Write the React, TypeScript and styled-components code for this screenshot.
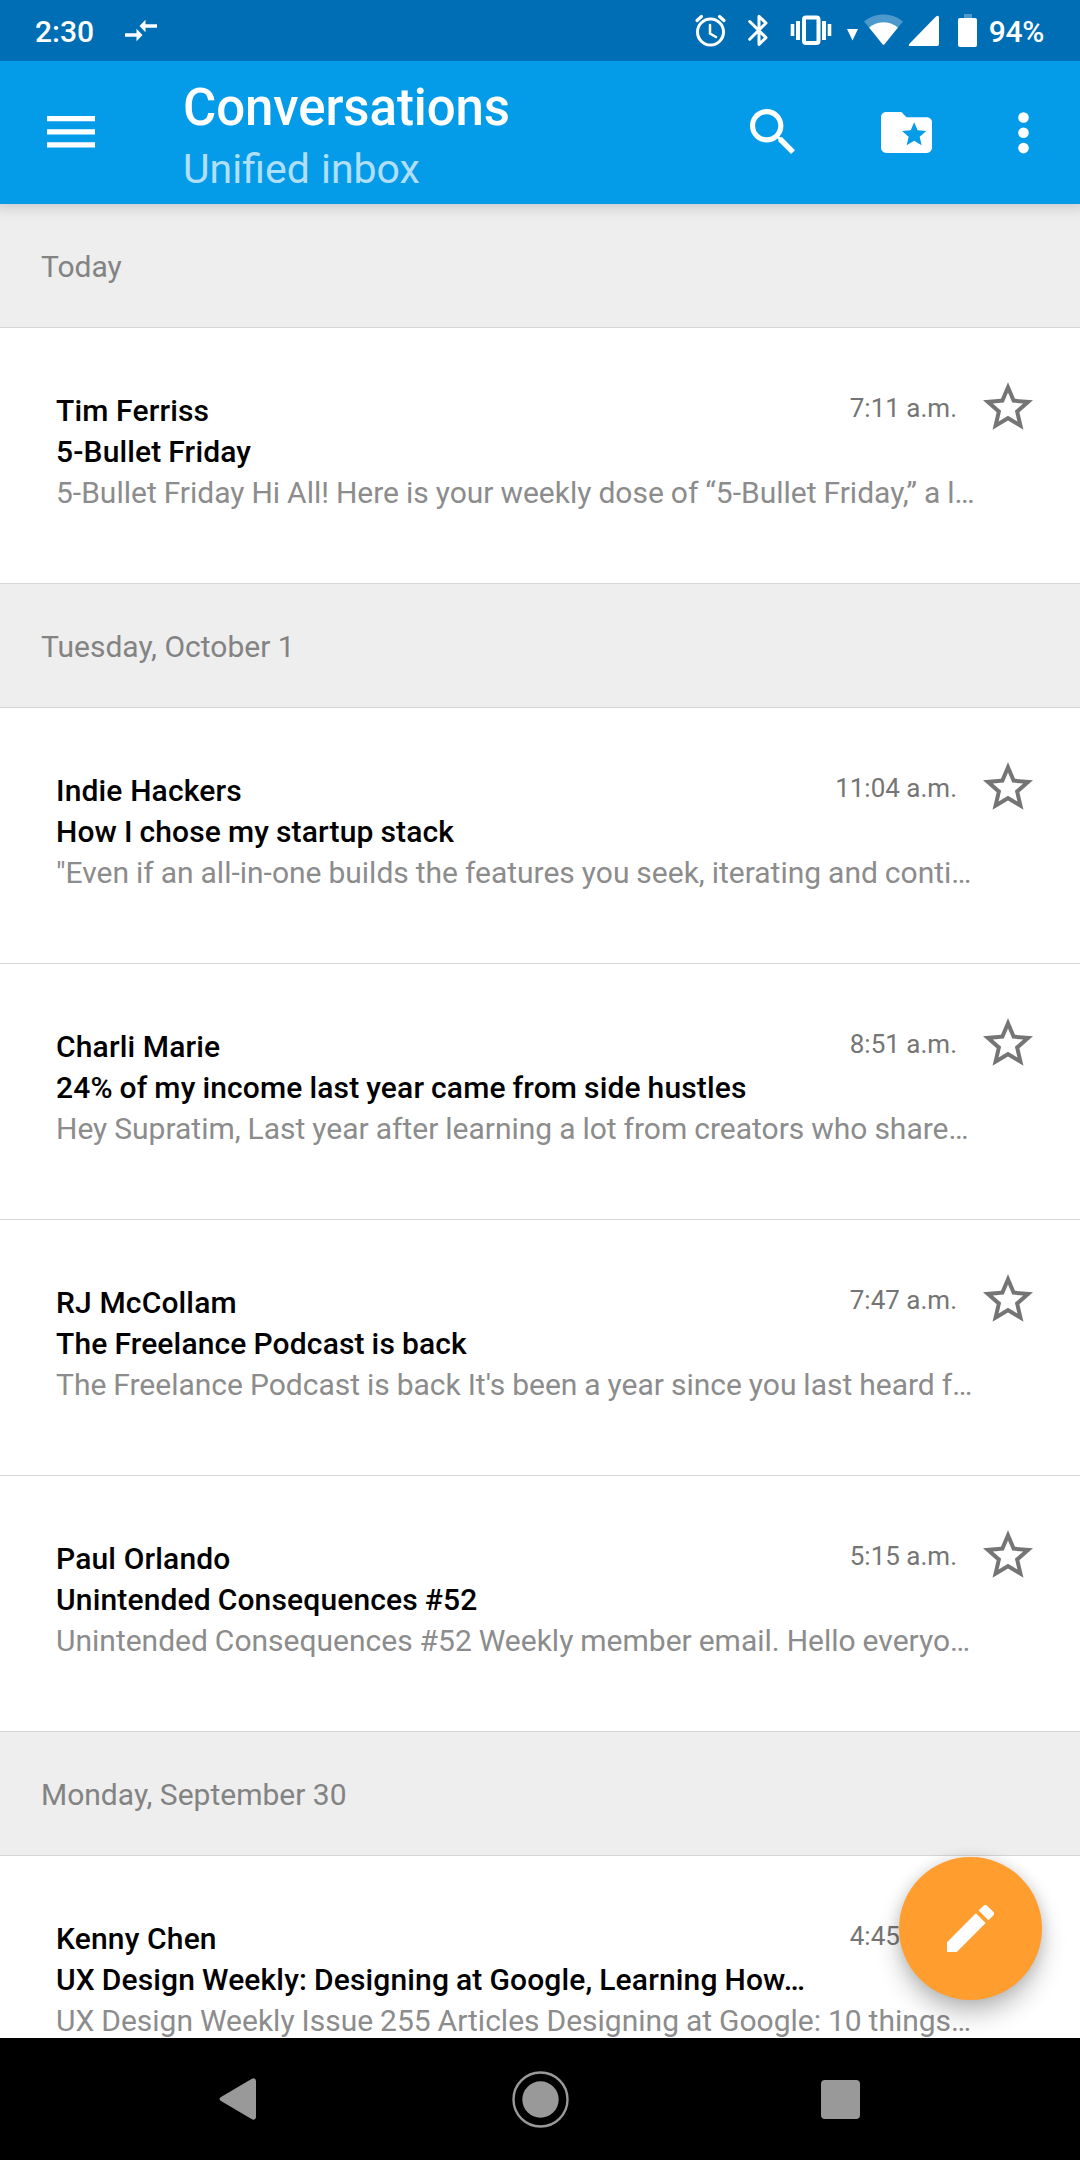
import React from "react";
import styled, { createGlobalStyle } from "styled-components";

const Global = createGlobalStyle`
  * { box-sizing: border-box; }
  html, body { margin: 0; padding: 0; }
  body { font-family: Roboto, "Noto Sans", sans-serif; background: #000; overflow: hidden; }
  svg { display: block; flex: none; }
`;

const Screen = styled.div`
  position: relative;
  width: 1080px;
  height: 2160px;
  display: flex;
  flex-direction: column;
  overflow: hidden;
  background: #fff;
`;

const StatusBar = styled.header`
  position: relative;
  z-index: 3;
  flex: none;
  height: 61px;
  padding: 0 36px 0 35px;
  display: flex;
  align-items: center;
  justify-content: space-between;
  background: #006eb5;
  color: #fff;
  font-size: 30px;
  font-weight: 500;
  line-height: 61px;
`;

const StatusGroup = styled.div`
  display: flex;
  align-items: center;
  height: 61px;
`;

const StatusText = styled.span<{ $gap?: number; $tracking?: number }>`
  margin-left: ${(p) => p.$gap ?? 0}px;
  padding-top: 2px;
  letter-spacing: ${(p) => p.$tracking ?? 0}px;
  white-space: nowrap;
`;

const SyncIcon = styled.svg`
  margin-left: 30px;
`;

const AppBar = styled.nav`
  position: relative;
  z-index: 2;
  flex: none;
  height: 143px;
  padding: 0 51px 0 46px;
  display: flex;
  align-items: center;
  background: #049be8;
  color: #fff;
  box-shadow: 0 -3px 14px 6px rgba(0, 0, 0, 0.17);
`;

const IconButton = styled.button<{ $gap?: number }>`
  margin: 0 0 0 ${(p) => p.$gap ?? 0}px;
  padding: 0;
  border: 0;
  background: none;
  color: inherit;
  flex: none;
`;

const Titles = styled.div`
  flex: 1;
  margin-left: 87px;
  align-self: flex-start;
`;

const Title = styled.h1`
  margin: 17px 0 0;
  font-size: 51px;
  line-height: 60px;
  font-weight: 500;
  letter-spacing: -0.1px;
`;

const Subtitle = styled.div`
  margin-top: 7px;
  font-size: 41px;
  line-height: 48px;
  word-spacing: 1px;
  color: rgba(255, 255, 255, 0.7);
`;

const List = styled.main`
  flex: 1;
  min-height: 0;
  overflow: hidden;
`;

const DateHeader = styled.h2`
  margin: 0;
  height: 124px;
  padding: 0 41px;
  font-size: 30px;
  font-weight: 400;
  line-height: 125px;
  color: #838383;
  background: #eee;
  border-bottom: 1px solid #d6d6d6;
`;

const Row = styled.article`
  height: 256px;
  padding: 54px 47px 0 56px;
  display: grid;
  grid-template-columns: minmax(0, 1fr) auto 50px;
  grid-template-rows: 20px 21px 41px 41px;
  border-bottom: 1px solid #d6d6d6;
`;

const Sender = styled.div`
  grid-column: 1;
  grid-row: 1 / 3;
  padding-top: 8px;
  font-size: 30px;
  line-height: 41px;
  font-weight: 500;
  letter-spacing: 0.15px;
  color: #000;
  white-space: nowrap;
`;

const Time = styled.time`
  grid-column: 2;
  grid-row: 1 / 3;
  padding: 6px 26px 0 0;
  font-size: 26px;
  line-height: 41px;
  color: #757575;
`;

const StarButton = styled.button`
  grid-column: 3;
  grid-row: 1 / 4;
  align-self: start;
  margin: 0;
  padding: 0;
  border: 0;
  background: none;
  color: #757575;
`;

const Subject = styled.div`
  grid-column: 1 / 3;
  grid-row: 3;
  padding-top: 8px;
  font-size: 30px;
  line-height: 41px;
  font-weight: 500;
  letter-spacing: 0.15px;
  word-spacing: -0.7px;
  color: #000;
  white-space: nowrap;
`;

const Preview = styled.div`
  grid-column: 1 / 4;
  grid-row: 4;
  padding-top: 8px;
  font-size: 30px;
  line-height: 41px;
  word-spacing: -0.5px;
  color: #8c8c8c;
  white-space: nowrap;
`;

const Fab = styled.button`
  position: absolute;
  z-index: 3;
  left: 899px;
  top: 1857px;
  width: 143px;
  height: 143px;
  padding: 0;
  border: 0;
  border-radius: 50%;
  display: flex;
  align-items: center;
  justify-content: center;
  background: #ff9d2e;
  color: #fff;
  box-shadow: 0 14px 24px rgba(0, 0, 0, 0.24), 0 0 14px rgba(0, 0, 0, 0.12);
`;

const NavBar = styled.footer`
  position: relative;
  z-index: 4;
  flex: none;
  height: 122px;
  padding: 0 220px 0 219px;
  display: flex;
  align-items: center;
  justify-content: space-between;
  background: #000;
  color: #999;
`;

const HomeIcon = styled.svg`
  margin-left: 3px;
`;

type Mail = { from: string; time: string; subject: string; preview: string };

const groups: { date: string; mails: Mail[] }[] = [
  {
    date: "Today",
    mails: [
      {
        from: "Tim Ferriss",
        time: "7:11 a.m.",
        subject: "5-Bullet Friday",
        preview: "5-Bullet Friday Hi All! Here is your weekly dose of “5-Bullet Friday,” a l…",
      },
    ],
  },
  {
    date: "Tuesday, October 1",
    mails: [
      {
        from: "Indie Hackers",
        time: "11:04 a.m.",
        subject: "How I chose my startup stack",
        preview: "\"Even if an all-in-one builds the features you seek, iterating and conti…",
      },
      {
        from: "Charli Marie",
        time: "8:51 a.m.",
        subject: "24% of my income last year came from side hustles",
        preview: "Hey Supratim, Last year after learning a lot from creators who share…",
      },
      {
        from: "RJ McCollam",
        time: "7:47 a.m.",
        subject: "The Freelance Podcast is back",
        preview: "The Freelance Podcast is back It's been a year since you last heard f…",
      },
      {
        from: "Paul Orlando",
        time: "5:15 a.m.",
        subject: "Unintended Consequences #52",
        preview: "Unintended Consequences #52 Weekly member email. Hello everyo…",
      },
    ],
  },
  {
    date: "Monday, September 30",
    mails: [
      {
        from: "Kenny Chen",
        time: "4:45 a.m.",
        subject: "UX Design Weekly: Designing at Google, Learning How…",
        preview: "UX Design Weekly Issue 255 Articles Designing at Google: 10 things…",
      },
    ],
  },
];

const StatusIcons = () => (
  <svg width="294" height="61" viewBox="690 0 294 61" fill="#fff">
    <g fill="none" stroke="#fff" strokeLinecap="round">
      <circle cx="710.5" cy="32" r="13" strokeWidth="3" />
      <path d="M710 25v8.5l6 3.5" strokeWidth="2.5" />
      <path d="M697 20.500l4.500-4M724 20.500l-4.500-4" strokeWidth="3.2" />
    </g>
    <path
      d="M749.700 21.500L766 37.600 759 44.300V16.300l7 6.700L749.700 39.300"
      fill="none"
      stroke="#fff"
      strokeWidth="3"
      strokeLinecap="round"
      strokeLinejoin="round"
    />
    <rect x="804" y="17.500" width="14.500" height="25.500" rx="2" fill="none" stroke="#fff" strokeWidth="4" />
    <path d="M796 21h4v19h-4zM790.700 24h3.600v12h-3.600zM822 21h4v19h-4zM827.700 24h3.600v12h-3.600z" />
    <path d="M847 29h11l-5.500 11.500z" />
    <path d="M864 21.500C875 12 892 12 903 21.500L898 27.500C889.500 20.500 877.500 20.500 869 27.500Z" fillOpacity="0.3" />
    <path d="M869 27.500C877.500 20.500 889.500 20.500 898 27.500L884.500 44.300q-1 1-2 0Z" />
    <path d="M939 17.500v26.500q0 2-2 2h-27q-2 0-.8-2L935.500 17q3.200-2.500 3.500.5z" />
    <path d="M964 14h8v5h-8z" fillOpacity="0.3" />
    <rect x="958" y="18" width="19" height="29" rx="2" />
  </svg>
);

const StarOutline = () => (
  <svg width="50" height="48" viewBox="2 2 20 19" fill="currentColor">
    <path d="M22 9.240l-7.190-.62L12 2 9.190 8.630 2 9.240l5.460 4.730L5.820 21 12 17.270 18.180 21l-1.630-7.030L22 9.240zM12 15.400l-3.760 2.270 1-4.280-3.320-2.880 4.380-.38L12 6.100l1.710 4.040 4.380.38-3.320 2.880 1 4.280L12 15.400z" />
  </svg>
);

export default function App() {
  return (
    <>
      <Global />
      <Screen>
        <StatusBar>
          <StatusGroup>
            <StatusText>2:30</StatusText>
            <SyncIcon width="34" height="24" viewBox="123 19 34 24" fill="#fff">
              <path d="M156 24.200h-11.500v-4.500l-6 6.300 6 6.300v-4.500H156zM124 33.200h11.500v-4.500l6 6.300-6 6.300v-4.500H124z" />
            </SyncIcon>
          </StatusGroup>
          <StatusGroup>
            <StatusIcons />
            <StatusText $gap={5} $tracking={-0.3}>94%</StatusText>
          </StatusGroup>
        </StatusBar>
        <AppBar>
          <IconButton aria-label="Menu">
            <svg width="50" height="33" viewBox="0 0 50 33" fill="currentColor">
              <path d="M1 0h48v5.200H1zM1 13.200h48v5.200H1zM1 26.300h48v5.200H1z" />
            </svg>
          </IconButton>
          <Titles>
            <Title>Conversations</Title>
            <Subtitle>Unified inbox</Subtitle>
          </Titles>
          <IconButton aria-label="Search">
            <svg width="45" height="48" viewBox="3 3 17.500 18.670" fill="currentColor">
              <path d="M15.500 14h-.79l-.28-.27C15.410 12.590 16 11.110 16 9.500 16 5.910 13.090 3 9.500 3S3 5.910 3 9.500 5.910 16 9.500 16c1.610 0 3.090-.59 4.230-1.570l.27.28v.79l5 4.990L20.490 19l-4.990-5zm-6 0C7.010 14 5 11.990 5 9.500S7.010 5 9.500 5 14 7.010 14 9.500 11.990 14 9.500 14z" />
            </svg>
          </IconButton>
          <IconButton aria-label="Folders" $gap={86}>
            <svg width="51" height="41" viewBox="2 4 20 16" fill="currentColor">
              <path d="M20 6h-8l-2-2H4c-1.100 0-1.990.9-1.990 2L2 18c0 1.100.9 2 2 2h16c1.100 0 2-.9 2-2V8c0-1.100-.9-2-2-2zm-2.060 11L15 15.280 12.060 17l.78-3.330-2.590-2.240 3.410-.29L15 8l1.340 3.140 3.410.29-2.590 2.240.78 3.330z" />
            </svg>
          </IconButton>
          <IconButton aria-label="More" $gap={86}>
            <svg width="11" height="42" viewBox="0 0 11 42" fill="currentColor">
              <circle cx="5.500" cy="5.500" r="5.300" />
              <circle cx="5.500" cy="20.800" r="5.300" />
              <circle cx="5.500" cy="36.100" r="5.300" />
            </svg>
          </IconButton>
        </AppBar>
        <List>
          {groups.map((g) => (
            <React.Fragment key={g.date}>
              <DateHeader>{g.date}</DateHeader>
              {g.mails.map((m) => (
                <Row key={m.from}>
                  <Sender>{m.from}</Sender>
                  <Time>{m.time}</Time>
                  <StarButton aria-label="Star">
                    <StarOutline />
                  </StarButton>
                  <Subject>{m.subject}</Subject>
                  <Preview>{m.preview}</Preview>
                </Row>
              ))}
            </React.Fragment>
          ))}
        </List>
        <Fab aria-label="Compose">
          <svg width="47" height="47" viewBox="3 3 18 18" fill="currentColor">
            <path d="M3 17.250V21h3.750L17.810 9.940l-3.750-3.750L3 17.250zM20.710 7.040c.39-.39.39-1.020 0-1.410l-2.340-2.340c-.39-.39-1.020-.39-1.410 0l-1.830 1.830 3.750 3.750 1.830-1.830z" />
          </svg>
        </Fab>
        <NavBar>
          <svg width="37" height="42" viewBox="0 0 37 42" fill="currentColor">
            <path d="M2 19L32.500 1q4-2 4.500 2v36q-.5 4-4.500 2L2 23q-3-2 0-4z" />
          </svg>
          <HomeIcon width="57" height="57" viewBox="0 0 57 57" fill="currentColor">
            <circle cx="28.500" cy="28.500" r="27" fill="none" stroke="currentColor" strokeWidth="2.4" />
            <circle cx="28.500" cy="28.500" r="18.200" />
          </HomeIcon>
          <svg width="39" height="39" viewBox="0 0 39 39" fill="currentColor">
            <rect width="39" height="39" rx="4" />
          </svg>
        </NavBar>
      </Screen>
    </>
  );
}
